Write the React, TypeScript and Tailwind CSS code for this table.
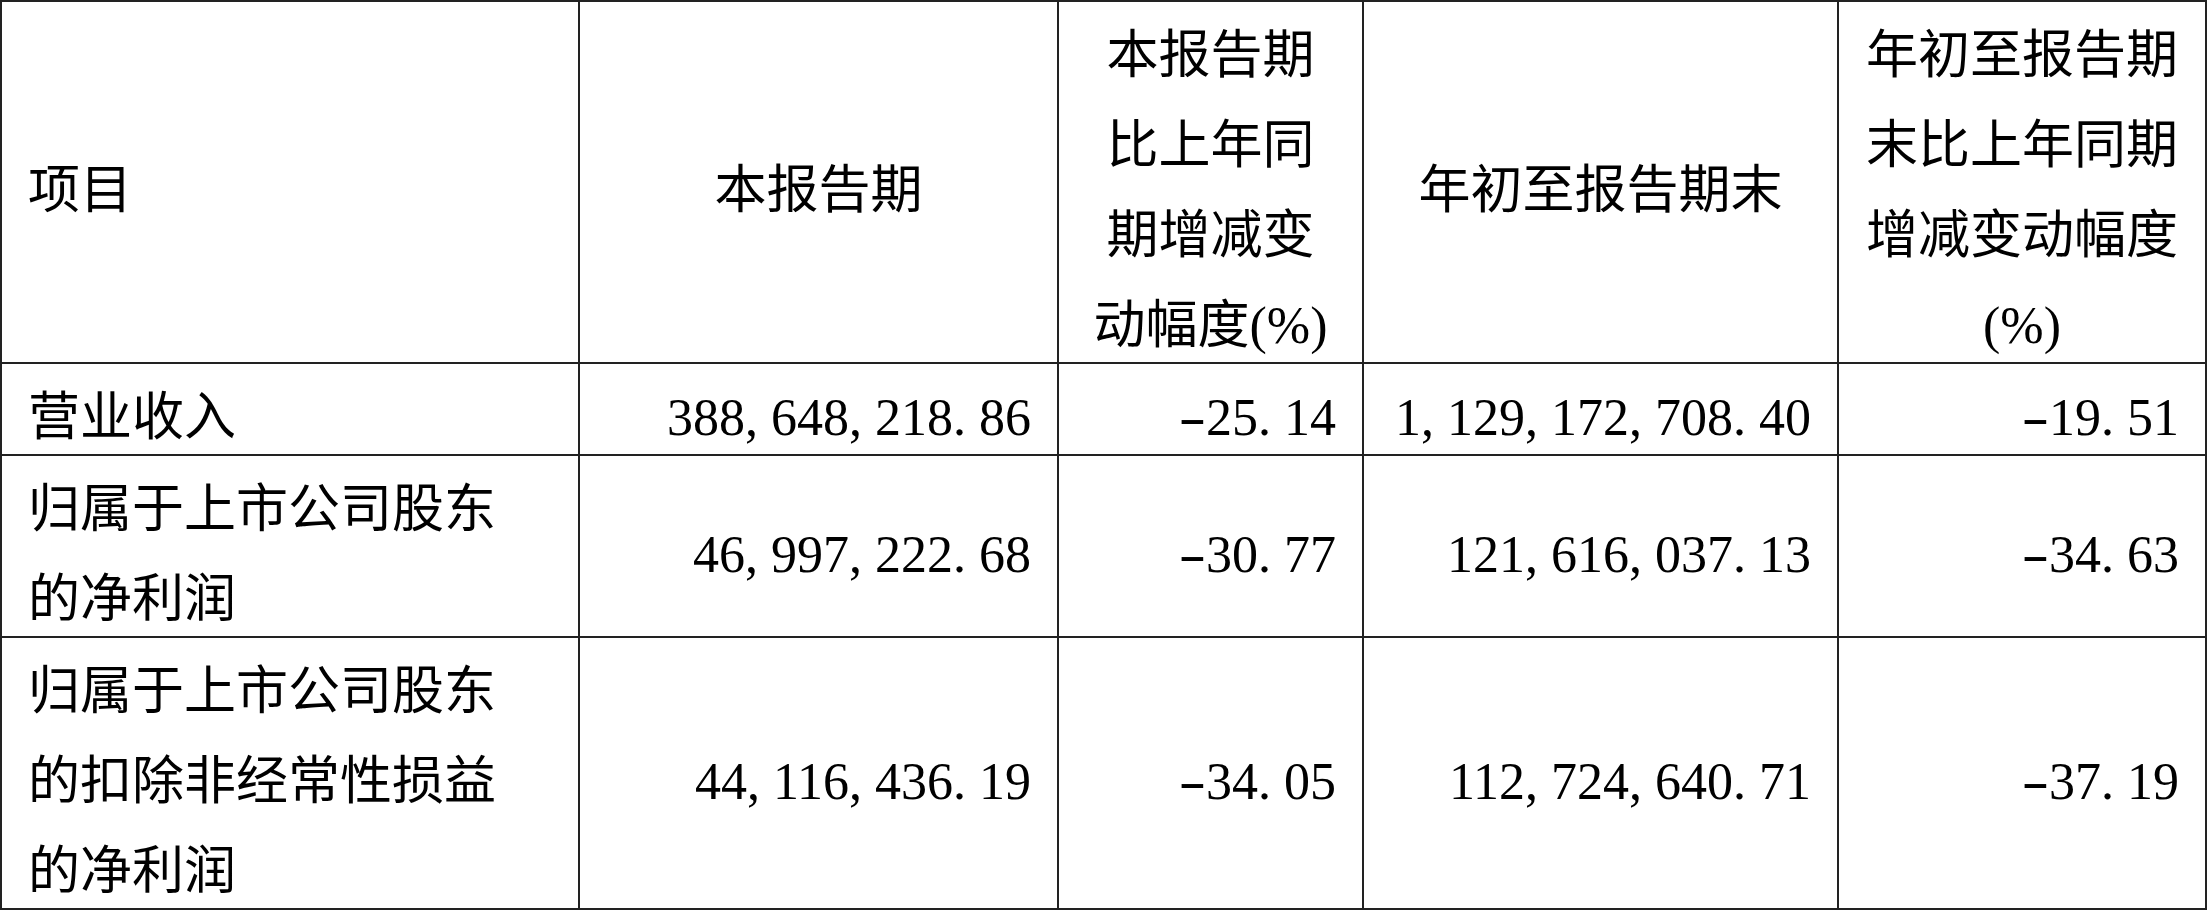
const rows = [
  {
    label: ["营业收入"],
    values: ["388,648,218.86", "-25.14", "1,129,172,708.40", "-19.51"],
  },
  {
    label: ["归属于上市公司股东", "的净利润"],
    values: ["46,997,222.68", "-30.77", "121,616,037.13", "-34.63"],
  },
  {
    label: ["归属于上市公司股东", "的扣除非经常性损益", "的净利润"],
    values: ["44,116,436.19", "-34.05", "112,724,640.71", "-37.19"],
  },
];

// text sits a little under the middle of each 90px line, as in the source
const Txt = ({ children }: { children: React.ReactNode }) => (
  <span className="align-[-9px] leading-[52px]">{children}</span>
);

// half-width cells so punctuation takes the same room as a digit
const Num = ({ text }: { text: string }) => (
  <span className="whitespace-nowrap">
    {text.split("").map((ch, i) =>
      /[0-9]/.test(ch) ? (
        <span key={i}>{ch}</span>
      ) : ch === "-" ? (
        <span key={i} className="inline-block w-[0.5em] text-right">
          <span className="inline-block scale-x-160 origin-right">-</span>
        </span>
      ) : (
        <span key={i} className="inline-block w-[0.5em] text-left">
          {ch}
        </span>
      )
    )}
  </span>
);

const cell = "border-2 border-[#222] px-[26px] align-middle";

export default function App() {
  return (
    <div className="bg-white w-[2207px] h-[912px] overflow-hidden">
      <table
        className="table-fixed border-collapse w-[2205px] text-[52px] leading-[90px] text-black"
        style={{ fontFamily: '"Liberation Serif", "Noto Sans CJK SC", serif' }}
      >
        <colgroup>
          <col className="w-[578px]" />
          <col className="w-[479px]" />
          <col className="w-[305px]" />
          <col className="w-[475px]" />
          <col className="w-[368px]" />
        </colgroup>
        <thead>
          <tr>
            <th className={`${cell} font-normal text-left`}>
              <Txt>项目</Txt>
            </th>
            <th className={`${cell} font-normal text-center`}>
              <Txt>本报告期</Txt>
            </th>
            <th className={`${cell} font-normal text-center`}>
              <Txt>本报告期比上年同期增减变动幅度(%)</Txt>
            </th>
            <th className={`${cell} font-normal text-center`}>
              <Txt>年初至报告期末</Txt>
            </th>
            <th className={`${cell} font-normal text-center`}>
              <Txt>年初至报告期末比上年同期增减变动幅度(%)</Txt>
            </th>
          </tr>
        </thead>
        <tbody>
          {rows.map((r, i) => (
            <tr key={i}>
              <td className={`${cell} text-left`}>
                {r.label.map((l, j) => (
                  <div key={j}>
                    <Txt>{l}</Txt>
                  </div>
                ))}
              </td>
              {r.values.map((v, j) => (
                <td key={j} className={`${cell} text-right`}>
                  <Txt>
                    <Num text={v} />
                  </Txt>
                </td>
              ))}
            </tr>
          ))}
        </tbody>
      </table>
    </div>
  );
}
